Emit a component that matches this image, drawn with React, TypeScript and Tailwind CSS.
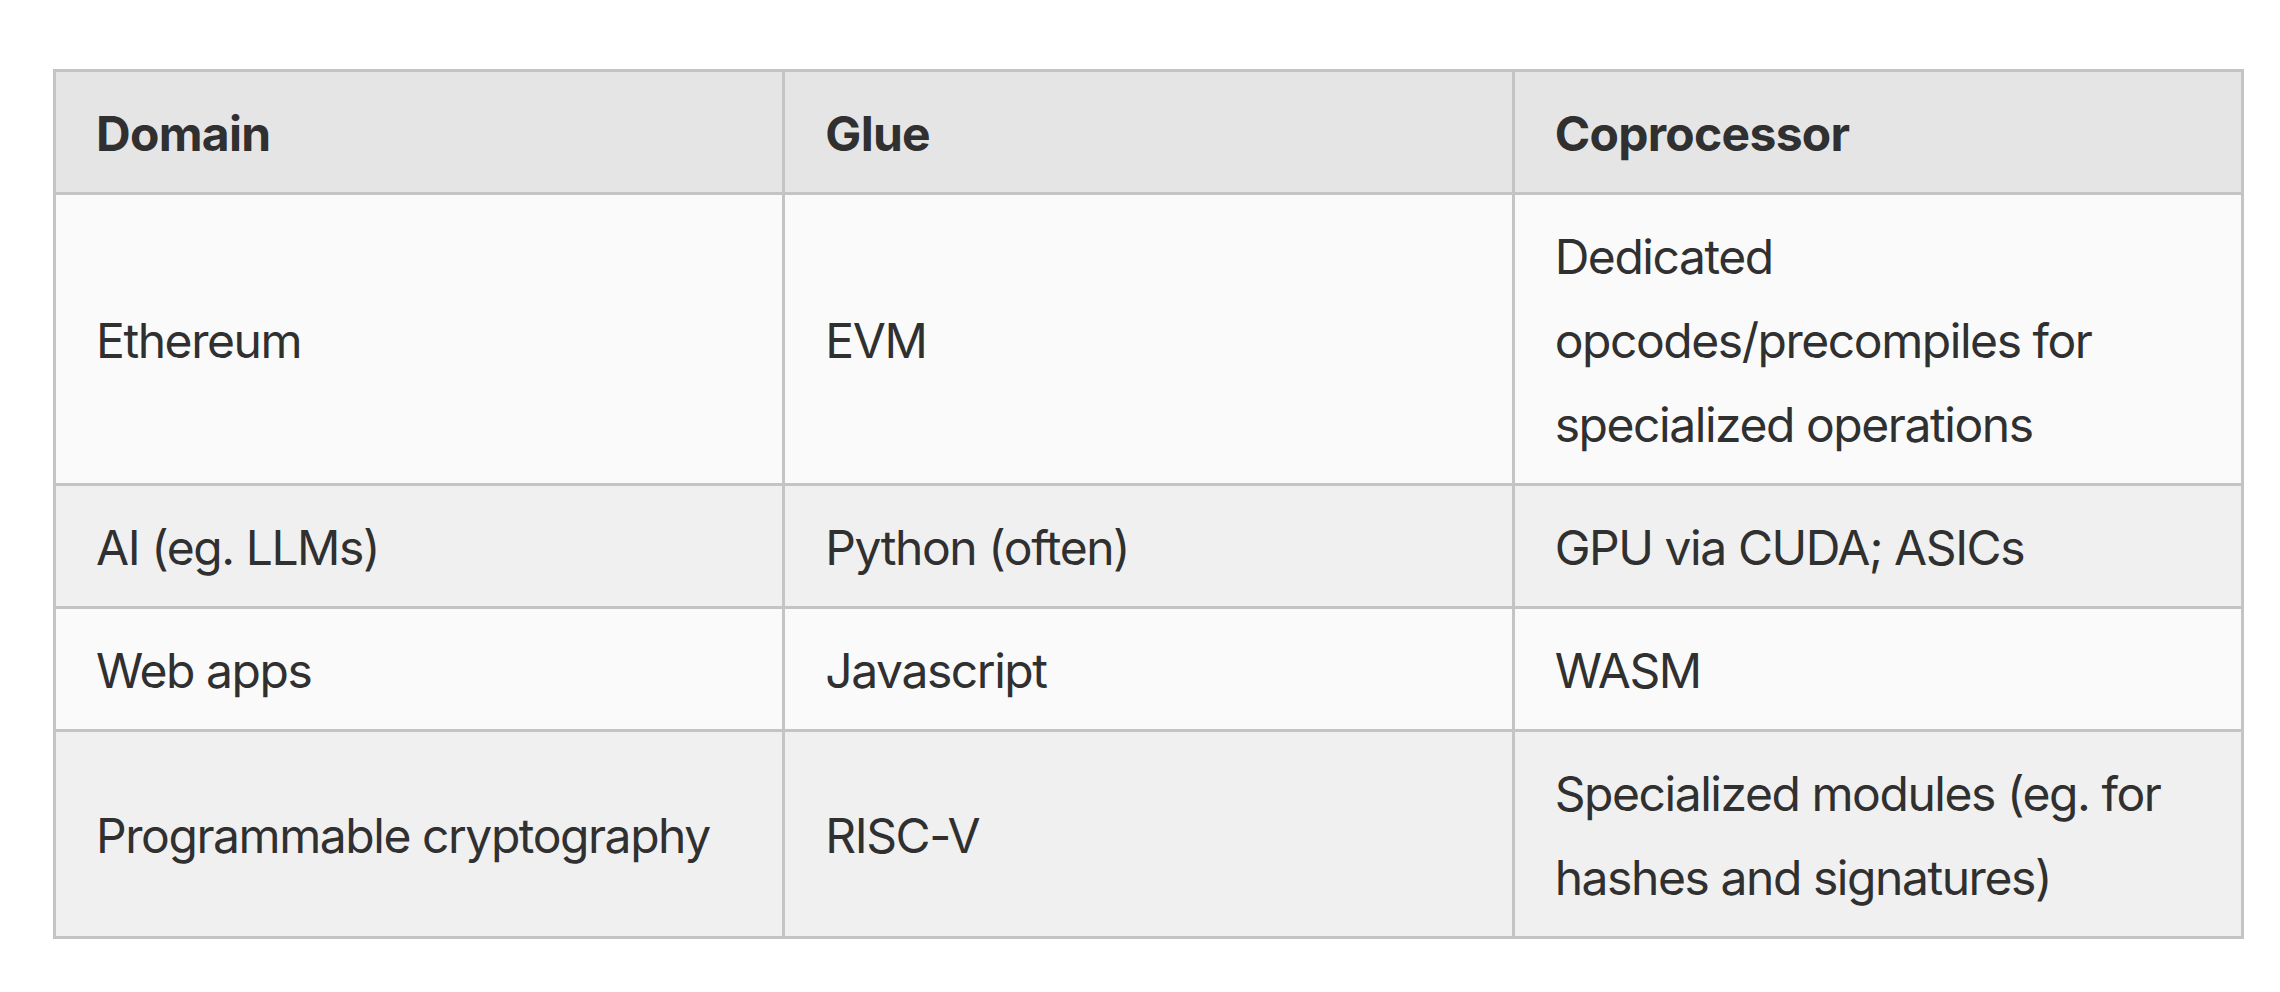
import React from 'react'

const rows: { domain: string; glue: string; co: string; bg: string }[] = [
    { domain: 'Ethereum', glue: 'EVM', co: 'Dedicated opcodes/precompiles for specialized operations', bg: 'bg-[#fafafa]' },
    { domain: 'AI (eg. LLMs)', glue: 'Python (often)', co: 'GPU via CUDA; ASICs', bg: 'bg-[#f0f0f0]' },
    { domain: 'Web apps', glue: 'Javascript', co: 'WASM', bg: 'bg-[#fafafa]' },
    { domain: 'Programmable cryptography', glue: 'RISC-V', co: 'Specialized modules (eg. for hashes and signatures)', bg: 'bg-[#f0f0f0]' },
]

export default function App() {
    return (
        <div className="min-h-screen w-full bg-white pl-[53px] pt-[69px] text-[#303030]" style={{ fontFamily: 'Inter, "Noto Sans", sans-serif' }}>
            <table className="w-[2191px] table-fixed border-collapse text-[48px] leading-[84px]">
                <thead>
                    <tr className="bg-[#e6e5e6]">
                        <th className="w-1/3 border-[3px] border-[#c4c4c4] px-[40px] pt-[20px] pb-[16px] text-left font-bold tracking-[-0.015em]">Domain</th>
                        <th className="w-1/3 border-[3px] border-[#c4c4c4] px-[40px] pt-[20px] pb-[16px] text-left font-bold tracking-[-0.015em]">Glue</th>
                        <th className="w-1/3 border-[3px] border-[#c4c4c4] px-[40px] pt-[20px] pb-[16px] text-left font-bold tracking-[-0.015em]">Coprocessor</th>
                    </tr>
                </thead>
                <tbody className="tracking-[-0.03em]">
                    {rows.map((r) => (
                        <tr key={r.domain} className={r.bg}>
                            <td className="border-[3px] border-[#c4c4c4] px-[40px] pt-[20px] pb-[16px] align-middle">{r.domain}</td>
                            <td className="border-[3px] border-[#c4c4c4] px-[40px] pt-[20px] pb-[16px] align-middle">{r.glue}</td>
                            <td className="border-[3px] border-[#c4c4c4] px-[40px] pt-[20px] pb-[16px] align-middle">{r.co}</td>
                        </tr>
                    ))}
                </tbody>
            </table>
        </div>
    )
}
